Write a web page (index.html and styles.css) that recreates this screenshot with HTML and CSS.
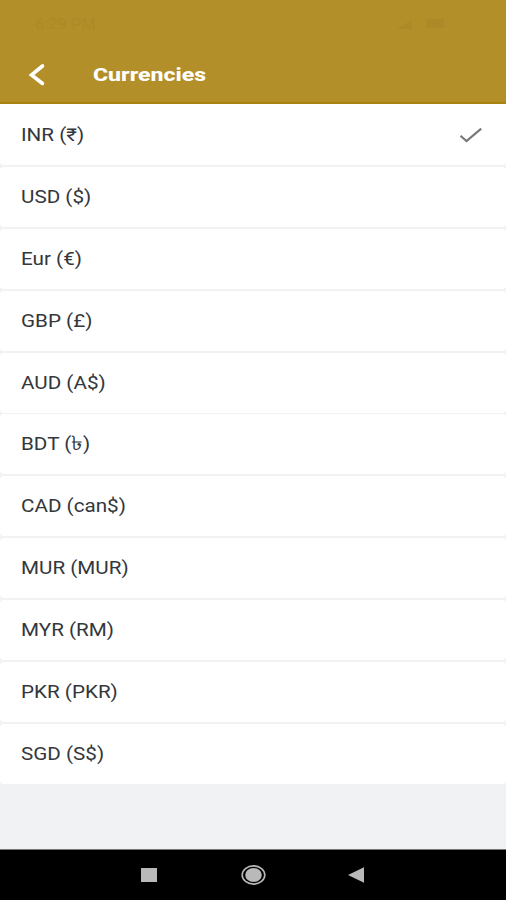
FILE: index.html
```html
<!DOCTYPE html>
<html lang="en">
<head>
<meta charset="utf-8">
<title>Currencies</title>
<link rel="stylesheet" href="styles.css">
</head>
<body>
<div class="screen">
  <header class="header">
    <div class="status">
      <span>6:29 PM</span>
      <svg width="90" height="14" viewBox="0 0 90 14"><path d="M0 11L14 3V12H0ZM28 2H46V11H28Z" fill="currentColor"/></svg>
    </div>
    <div class="bar">
      <svg class="back" width="18" height="24" viewBox="0 0 18 24"><path d="M14.5 3L3.5 12L14.5 20.5" fill="none" stroke="currentColor" stroke-width="3.6" stroke-linecap="round" stroke-linejoin="miter"/></svg>
      <h1 class="title">Currencies</h1>
    </div>
  </header>
  <main class="list">
    <div class="row"><span class="name">INR (₹)</span><svg class="check" width="24" height="18" viewBox="0 0 24 18"><path d="M1.5 9.8L7.5 15.1L22.2 2.6" fill="none" stroke="currentColor" stroke-width="2.1"/></svg></div>
    <div class="row"><span class="name">USD ($)</span></div>
    <div class="row"><span class="name">Eur (€)</span></div>
    <div class="row"><span class="name">GBP (£)</span></div>
    <div class="row"><span class="name">AUD (A$)</span></div>
    <div class="row"><span class="name">BDT (<span class="taka">৳</span>)</span></div>
    <div class="row"><span class="name">CAD (can$)</span></div>
    <div class="row"><span class="name">MUR (MUR)</span></div>
    <div class="row"><span class="name">MYR (RM)</span></div>
    <div class="row"><span class="name">PKR (PKR)</span></div>
    <div class="row"><span class="name">SGD (S$)</span></div>
  </main>
  <nav class="nav">
    <svg width="16" height="14" viewBox="0 0 16 14"><path d="M0 0H16V14H0Z" fill="currentColor"/></svg>
    <svg width="25" height="20" viewBox="0 0 25 20"><ellipse cx="12.5" cy="10" rx="11.3" ry="9.1" fill="none" stroke="currentColor" stroke-width="1.6"/><ellipse cx="12.5" cy="10" rx="8.3" ry="6.9" fill="currentColor"/></svg>
    <svg width="16" height="16" viewBox="0 0 16 16"><path d="M0 8L16 .3V15.7Z" fill="currentColor"/></svg>
  </nav>
</div>
</body>
</html>
```
FILE: styles.css
```css
body {
  margin: 0;
  font-family: Roboto, "Noto Sans", "Liberation Sans", sans-serif;
}
.screen {
  display: flex;
  flex-direction: column;
  width: 506px;
  height: 900px;
  background: #f0f2f4;
  overflow: hidden;
}
.header {
  box-sizing: border-box;
  height: 104px;
  background: #b28f29;
  border-bottom: 2px solid #a98310;
  color: #fff;
}
.status {
  display: flex;
  justify-content: space-between;
  align-items: center;
  height: 48px;
  padding: 0 18px 0 35px;
  box-sizing: border-box;
  color: #ad8a28;
  font-size: 14px;
}
.status span {
  transform: scaleX(1.18);
  transform-origin: left;
}
.bar {
  display: flex;
  align-items: center;
  height: 53px;
  padding-left: 28px;
}
.back {
  flex: none;
  margin-right: 47px;
}
.title {
  margin: 0;
  font-size: 18px;
  font-weight: 800;
  line-height: 24px;
  transform: scaleX(1.28);
  transform-origin: left;
}
.list {
  display: flex;
  flex-direction: column;
  gap: 1.9px;
  padding-top: 1px;
  background: linear-gradient(#fff 12px, transparent 12px);
}
.row {
  display: flex;
  align-items: center;
  justify-content: space-between;
  box-sizing: border-box;
  height: 60px;
  padding: 0 23px 0 21px;
  background: #fff;
  border-radius: 4px;
}
.name {
  color: #34373b;
  font-size: 17.5px;
  line-height: 24px;
  transform: scaleX(1.18);
  transform-origin: left;
}
.taka {
  font-size: 20px;
  line-height: 1;
}
.check {
  color: #777;
}
.nav {
  display: flex;
  align-items: center;
  box-sizing: border-box;
  height: 51px;
  margin-top: auto;
  padding-left: 141px;
  border-top: 1px solid #777;
  background: #000;
  color: #b9b9b9;
}
.nav svg:nth-child(2) {
  margin: 0 82px 0 84px;
}
```
